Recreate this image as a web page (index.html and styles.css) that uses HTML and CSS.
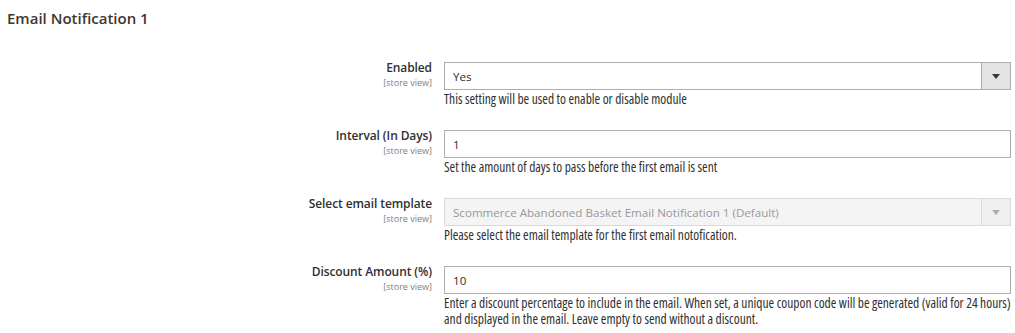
FILE: index.html
```
<!DOCTYPE html>
<html>
<head>
    <title>Email Notification 1</title>
    <link rel="stylesheet" href="styles.css">
</head>
<body>
    <div class="section">
        <h3 class="section-title">Email Notification 1</h3>

        <div class="config-rows">
            <!-- Enabled -->
            <div class="config-row">
                <div class="field-label">
                    <label for="enabled">Enabled</label>
                    <span class="scope">[store view]</span>
                </div>
                <div class="field-value">
                    <div class="select-wrap">
                        <select id="enabled">
                            <option value="1">Yes</option>
                            <option value="0">No</option>
                        </select>
                    </div>
                    <p class="note">This setting will be used to enable or disable module</p>
                </div>
            </div>

            <!-- Interval -->
            <div class="config-row">
                <div class="field-label">
                    <label for="interval">Interval (In Days)</label>
                    <span class="scope">[store view]</span>
                </div>
                <div class="field-value">
                    <input type="text" id="interval" value="1">
                    <p class="note">Set the amount of days to pass before the first email is sent</p>
                </div>
            </div>

            <!-- Email template -->
            <div class="config-row">
                <div class="field-label">
                    <label for="template">Select email template</label>
                    <span class="scope">[store view]</span>
                </div>
                <div class="field-value">
                    <div class="select-wrap disabled">
                        <select id="template" disabled>
                            <option>Scommerce Abandoned Basket Email Notification 1 (Default)</option>
                        </select>
                    </div>
                    <p class="note">Please select the email template for the first email notofication.</p>
                </div>
            </div>

            <!-- Discount -->
            <div class="config-row">
                <div class="field-label">
                    <label for="discount">Discount Amount (%)</label>
                    <span class="scope">[store view]</span>
                </div>
                <div class="field-value">
                    <input type="text" id="discount" value="10">
                    <p class="note">Enter a discount percentage to include in the email. When set, a unique coupon code will be generated (valid for 24 hours) and displayed in the email. Leave empty to send without a discount.</p>
                </div>
            </div>
        </div>
    </div>
</body>
</html>
```

FILE: styles.css
```
body {
    margin: 0;
    font-family: "Open Sans", "Liberation Sans", sans-serif;
    color: #303030;
    background: #fff;
}
.section {
    padding: 7px 4px 0 7px;
}
.section-title {
    margin: 0;
    font-size: 15px;
    font-weight: 600;
    line-height: 22px;
    color: #41362f;
}
.config-rows {
    display: flex;
    flex-direction: column;
    gap: 20px;
    margin-top: 30px;
}
.config-row {
    display: grid;
    grid-template-columns: 425px 567px;
    column-gap: 12px;
}
.field-label {
    text-align: right;
}
.field-label label {
    display: block;
    font-size: 12px;
    font-weight: 600;
    line-height: 18px;
    letter-spacing: -0.1px;
    color: #303030;
}
.scope {
    display: block;
    font-size: 9px;
    line-height: 11px;
    color: #808080;
}
.field-value {
    padding-top: 3px;
}
input, select {
    display: block;
    width: 100%;
    height: 28px;
    margin: 0;
    padding: 0 8px;
    border: 1px solid #adadad;
    border-radius: 0;
    box-sizing: border-box;
    background-color: #fff;
    font-family: inherit;
    font-size: 11.6px;
    color: #303030;
    outline: none;
}
.select-wrap {
    position: relative;
}
.select-wrap select {
    appearance: none;
    -webkit-appearance: none;
    padding-right: 36px;
    cursor: pointer;
}
.select-wrap::before {
    content: "";
    position: absolute;
    top: 1px;
    right: 1px;
    bottom: 1px;
    width: 28px;
    border-left: 1px solid #adadad;
    background-color: #e3e3e3;
    pointer-events: none;
}
.select-wrap::after {
    content: "";
    position: absolute;
    top: 12px;
    right: 11px;
    border-left: 4px solid transparent;
    border-right: 4px solid transparent;
    border-top: 5px solid #41362f;
    pointer-events: none;
}
.select-wrap.disabled select {
    border-color: #d9d9d9;
    background-color: #f4f4f4;
    color: #999;
    opacity: 1;
    cursor: default;
}
.select-wrap.disabled::before {
    border-left-color: #d9d9d9;
    background-color: #f0f0f0;
}
.select-wrap.disabled::after {
    border-top-color: #adadad;
}
.note {
    margin: 1px 0 0;
    font-size: 13.5px;
    font-stretch: semi-condensed;
    line-height: 16px;
    color: #303030;
}
```
